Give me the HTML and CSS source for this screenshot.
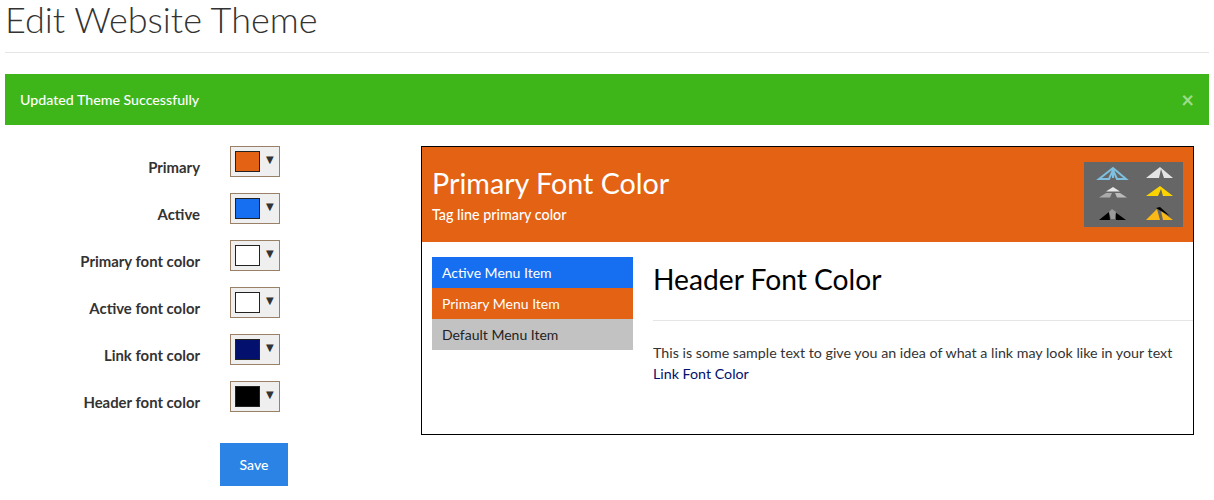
FILE: index.html
```html
<!DOCTYPE html>
<html lang="en">
<head>
<meta charset="utf-8">
<title>Edit Website Theme</title>
<link rel="stylesheet" href="styles.css">
</head>
<body>
<header class="page-header"><h1>Edit Website Theme</h1></header>
<div class="alert"><span>Updated Theme Successfully</span><span class="close">×</span></div>
<main class="content">
  <form class="theme-form">
    <div class="row"><label>Primary</label><button type="button" class="picker"><i class="swatch primary"></i><b>▼</b></button></div>
    <div class="row"><label>Active</label><button type="button" class="picker"><i class="swatch active"></i><b>▼</b></button></div>
    <div class="row"><label>Primary font color</label><button type="button" class="picker"><i class="swatch white"></i><b>▼</b></button></div>
    <div class="row"><label>Active font color</label><button type="button" class="picker"><i class="swatch white"></i><b>▼</b></button></div>
    <div class="row"><label>Link font color</label><button type="button" class="picker"><i class="swatch link"></i><b>▼</b></button></div>
    <div class="row"><label>Header font color</label><button type="button" class="picker"><i class="swatch black"></i><b>▼</b></button></div>
    <button type="button" class="save">Save</button>
  </form>
  <section class="preview">
    <div class="banner">
      <div>
        <div class="brand">Primary Font Color</div>
        <div class="tag">Tag line primary color</div>
      </div>
      <svg class="logos" width="99" height="65" viewBox="0 0 99 65">
        <g class="soft">
          <g fill="none" stroke="#7fc0e0" stroke-width="2"><path d="M15 17 29 6 42 17H33L29 8 25 17Z"/><path d="M29 6V16"/></g>
          <path d="M62 16 76 5 89 16H80L77 7 75 16Z" fill="#e4e4e4"/>
          <path d="M29 25 36 29.500H22Z" fill="#e8e8e8"/>
          <path d="M15 35.500 22 31H28L26 35.500Z" fill="#aaa"/>
          <path d="M43 35.500 36 31H31L33 35.500Z" fill="#bbb"/>
          <path d="M62 34 76 24 89 34H79L77 27 74 34Z" fill="#fbd400"/>
          <path d="M15 58 25 50 26 58Z" fill="#000"/>
          <path d="M42 58 31 50 32 58Z" fill="#000"/>
          <path d="M28 47 32 50 31 57H27L25 50Z" fill="#999"/>
          <path d="M62 58 73 47 76 58Z" fill="#fbb917"/>
          <path d="M77 49 89 58H79Z" fill="#fbb917"/>
          <path d="M72 46 76 45 86 54 77 49Z" fill="#000"/>
        </g>
      </svg>
    </div>
    <div class="preview-body">
      <nav class="menu">
        <a class="active">Active Menu Item</a>
        <a class="primary">Primary Menu Item</a>
        <a class="default">Default Menu Item</a>
      </nav>
      <article class="sample">
        <h2>Header Font Color</h2>
        <p>This is some sample text to give you an idea of what a link may look like in your text <a>Link Font Color</a></p>
      </article>
    </div>
  </section>
</main>
</body>
</html>
```
FILE: styles.css
```css
* { box-sizing: border-box; }
body { margin: 0; padding: 0 5px; font-family: "Lato", "Noto Sans", sans-serif; font-size: 14px; color: #333; background: #fff; height: 500px; overflow: hidden; }
.page-header { height: 53px; border-bottom: 1px solid #e5e5e5; margin-bottom: 21px; }
h1 { margin: 0; font-size: 36px; font-weight: 300; line-height: 38px; }
.alert { height: 51px; background: #3eb61a; color: #fff; display: flex; justify-content: space-between; align-items: center; padding: 0 15px; font-size: 14.2px; font-weight: 500; }
.close { font-size: 22px; font-weight: 700; color: #9ddc8a; }
.content { display: flex; padding-top: 21px; }
.theme-form { width: 416px; flex: none; }
.row { display: flex; height: 47px; }
.row label { width: 195px; text-align: right; font-size: 14.9px; font-weight: 700; color: #333; padding-top: 12px; }
.picker { width: 50px; height: 31px; margin-left: 30px; padding: 4px; border: 1px solid #9b8068; background: #efefef; display: flex; align-items: flex-start; gap: 6px; }
.swatch { width: 25px; height: 21px; border: 1px solid #222; display: block; flex: none; }
.picker b { font-size: 10px; line-height: 18px; color: #333; font-weight: 400; font-family: "DejaVu Sans", sans-serif; }
.swatch.primary { background: #e36214; }
.swatch.active { background: #166ff0; }
.swatch.white { background: #fff; }
.swatch.link { background: #03106e; }
.swatch.black { background: #000; }
.save { display: block; margin: 15px 0 0 215px; width: 68px; height: 43px; background: #2b83e6; color: #fff; border: 0; font: 500 14px "Lato", sans-serif; }
.preview { width: 773px; height: 289px; border: 1px solid #000; }
.banner { height: 95px; background: #e36214; color: #fff; display: flex; justify-content: space-between; align-items: flex-start; padding: 15px 10px; }
.brand { font-size: 28.7px; line-height: 46px; margin-top: -2px; }
.tag { font-size: 14.3px; font-weight: 500; line-height: 18px; }
.logos { background: #666; display: block; flex: none; }
.soft { filter: blur(.35px); }
.preview-body { display: flex; padding: 15px 0 0 10px; }
.menu { width: 201px; flex: none; display: flex; flex-direction: column; }
.menu a { height: 31px; line-height: 31px; padding-left: 10px; }
.menu .active { background: #166ff0; color: #fff; }
.menu .primary { background: #e36214; color: #fff; }
.menu .default { background: #c2c2c2; color: #222; }
.sample { flex: 1; margin-left: 20px; }
h2 { margin: 0; height: 64px; border-bottom: 1px solid #e5e5e5; font-size: 28.2px; font-weight: 400; color: #000; line-height: 44px; }
.sample p { margin: 21px 20px 0 0; font-size: 14.25px; line-height: 21px; }
.sample p a { color: #03106e; }
```
